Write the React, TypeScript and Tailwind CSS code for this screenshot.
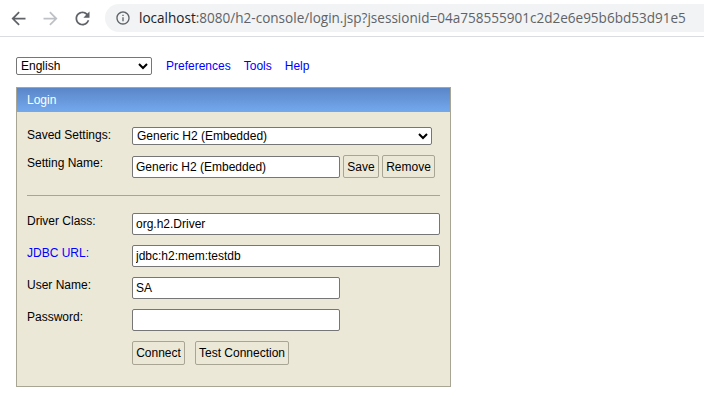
const arial = "font-['Liberation_Sans',Arial,sans-serif]";

const fieldClass =
  "h-[22px] rounded-[2px] border border-[#767676] bg-white px-[3px] text-[12px] text-black";
const buttonClass =
  "rounded-[2px] border border-[#a9a595] bg-[#ece8d8] text-[12px] text-black";

const Row = ({ label, blue, className, children }: { label: string; blue?: boolean; className?: string; children: React.ReactNode }) => (
  <div className={`flex ${className ?? ""}`}>
    <span className={`w-[105px] pt-[1px] leading-[14px] ${blue ? "text-[#0000ff]" : "text-black"}`}>{label}</span>
    {children}
  </div>
);

const ToolbarIcon = ({ d, size, className }: { d: string; size: number; className: string }) => (
  <svg width={size} height={size} viewBox="0 0 24 24" fill="currentColor" className={`shrink-0 ${className}`}>
    <path d={d} />
  </svg>
);

export default function App() {
  return (
    <div className={`h-[401px] w-[704px] overflow-hidden bg-white text-[12px] ${arial}`}>
      <div className="flex h-[37px] items-center border-b border-[#dadce0] bg-white pl-[8px]">
        <ToolbarIcon size={21} className="text-[#5f6368]" d="M20 11H7.83l5.59-5.59L12 4l-8 8 8 8 1.41-1.41L7.83 13H20v-2z" />
        <ToolbarIcon size={21} className="ml-[11px] text-[#bdc1c6]" d="M12 4l-1.41 1.41L16.17 11H4v2h12.17l-5.58 5.59L12 20l8-8z" />
        <ToolbarIcon size={21} className="ml-[11px] text-[#5f6368]" d="M17.65 6.35C16.2 4.9 14.21 4 12 4c-4.42 0-7.99 3.58-7.99 8s3.57 8 7.99 8c3.73 0 6.84-2.55 7.73-6h-2.08c-.82 2.33-3.04 4-5.65 4-3.31 0-6-2.69-6-6s2.69-6 6-6c1.66 0 3.14.69 4.22 1.78L13 11h7V4l-2.35 2.35z" />
        <div className="ml-[12px] flex h-[28px] flex-1 items-center rounded-l-[14px] bg-[#f1f3f4] pl-[10px]">
          <ToolbarIcon size={16} className="text-[#5f6368]" d="M11 7h2v2h-2zm0 4h2v6h-2zm1-9C6.48 2 2 6.48 2 12s4.48 10 10 10 10-4.48 10-10S17.52 2 12 2zm0 18c-4.41 0-8-3.59-8-8s3.59-8 8-8 8 3.59 8 8-3.59 8-8 8z" />
          <span className="ml-[8px] whitespace-nowrap font-['Open_Sans',sans-serif] text-[13.56px] text-[#5f6368]">
            <span className="text-[#202124]">localhost</span>:8080/h2-console/login.jsp?jsessionid=04a758555901c2d2e6e95b6bd53d91e5
          </span>
        </div>
      </div>

      <div className="pl-[16px] pt-[20px]">
        <div className="flex h-[18px] items-center">
          <select className="h-[18px] w-[136px] rounded-[2px] border border-[#767676] bg-white text-[12px] text-black">
            <option>English</option>
          </select>
          <a className="ml-[14px] text-[#0000ff]">Preferences</a>
          <a className="ml-[13px] text-[#0000ff]">Tools</a>
          <a className="ml-[13px] text-[#0000ff]">Help</a>
        </div>

        <div className="mt-[12px] h-[300px] w-[435px] border border-[#a9a595] bg-[#ece8d8]">
          <div className="h-[24px] bg-gradient-to-b from-[#5a86c8] to-[#74a9ee] pl-[10px] leading-[24px] text-white">Login</div>

          <div className="pl-[10px] pr-[10px] pt-[15px]">
            <Row label="Saved Settings:">
              <select defaultValue="h2" className="h-[18px] w-[300px] rounded-[2px] border border-[#767676] bg-white text-[12px] text-black">
                <option value="h2">Generic H2 (Embedded)</option>
              </select>
            </Row>
            <Row label="Setting Name:" className="mt-[10px]">
              <input readOnly value="Generic H2 (Embedded)" className={`mt-[1px] w-[208px] ${fieldClass}`} />
              <button className={`ml-[3px] h-[23px] w-[36px] ${buttonClass}`}>Save</button>
              <button className={`ml-[3px] h-[23px] w-[53px] ${buttonClass}`}>Remove</button>
            </Row>

            <div className="mt-[17px] h-px w-[413px] bg-[#a9a595]" />

            <Row label="Driver Class:" className="mt-[17px]">
              <input readOnly value="org.h2.Driver" className={`w-[308px] ${fieldClass}`} />
            </Row>
            <Row label="JDBC URL:" blue className="mt-[10px]">
              <input readOnly value="jdbc:h2:mem:testdb" className={`w-[308px] ${fieldClass}`} />
            </Row>
            <Row label="User Name:" className="mt-[10px]">
              <input readOnly value="SA" className={`w-[208px] ${fieldClass}`} />
            </Row>
            <Row label="Password:" className="mt-[10px]">
              <input readOnly type="password" className={`w-[208px] ${fieldClass}`} />
            </Row>
            <div className="mt-[10px] flex pl-[105px]">
              <button className={`h-[24px] w-[53px] ${buttonClass}`}>Connect</button>
              <button className={`ml-[10px] h-[24px] w-[94px] ${buttonClass}`}>Test Connection</button>
            </div>
          </div>
        </div>
      </div>
    </div>
  );
}
